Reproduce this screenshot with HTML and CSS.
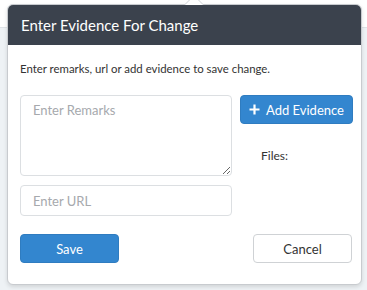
FILE: index.html
```html
<!DOCTYPE html>
<html>
<head>
<meta charset="utf-8">
<link rel="stylesheet" href="styles.css">
</head>
<body>
<div class="page">
  <div class="topbar"></div>
  <div class="backdrop"></div>
</div>
<div class="popover">
  <span class="arrow"></span>
  <div class="pop-header">Enter Evidence For Change</div>
  <div class="pop-body">
    <p class="intro">Enter remarks, url or add evidence to save change.</p>
    <div class="grid">
      <div class="left">
        <textarea class="remarks" placeholder="Enter Remarks"></textarea>
        <input class="url" type="text" placeholder="Enter URL">
      </div>
      <div class="right">
        <button class="btn btn-primary add"><svg width="11" height="11" viewBox="0 0 11 11"><path d="M5.5 0.5v10M0.5 5.5h10" stroke="#fff" stroke-width="2.2"/></svg>Add Evidence</button>
        <div class="files">Files:</div>
      </div>
    </div>
    <div class="actions">
      <button class="btn btn-primary save">Save</button>
      <button class="btn btn-default cancel">Cancel</button>
    </div>
  </div>
</div>
</body>
</html>
```
FILE: styles.css
```css
* { box-sizing: border-box; }
html, body { margin: 0; padding: 0; }
body {
  width: 367px;
  height: 290px;
  overflow: hidden;
  font-family: Lato, "Open Sans", sans-serif;
  background: #eef2f5;
  position: relative;
}
.page { display: flex; flex-direction: column; height: 290px; }
.topbar { height: 28px; background: #fff; border-bottom: 1px solid #dfe3e7; }
.backdrop { flex: 1; background: #eef2f5; }

.popover {
  position: absolute;
  left: 7px;
  top: 4px;
  width: 355px;
  height: 281px;
  background: #fff;
  border: 1px solid #c8cbcf;
  border-radius: 6px;
  box-shadow: 0 2px 4px rgba(0,0,0,0.12);
}
.arrow {
  position: absolute;
  top: -10px;
  left: 176px;
  width: 0; height: 0;
  border-left: 10px solid transparent;
  border-right: 10px solid transparent;
  border-bottom: 10px solid #cfd2d6;
}
.arrow::after {
  content: "";
  position: absolute;
  left: -9px;
  top: 1px;
  border-left: 9px solid transparent;
  border-right: 9px solid transparent;
  border-bottom: 9px solid #fff;
}
.pop-header {
  position: relative;
  height: 40px;
  background: #3b424d;
  color: #fff;
  font-size: 15px;
  line-height: 40px;
  padding-left: 13px;
  border-radius: 5px 5px 0 0;
}
.pop-body { padding: 16px 9px 0 12px; }
.intro {
  margin: 0;
  font-size: 11.4px;
  line-height: 16px;
  color: #333;
}
.grid {
  display: flex;
  margin-top: 18px;
  gap: 8px;
}
.left { width: 212px; display: flex; flex-direction: column; gap: 9px; }
.remarks, .url {
  font-family: Lato, "Open Sans", sans-serif;
  font-size: 13px;
  color: #555;
  border: 1px solid #dcdfe2;
  border-radius: 4px;
  padding: 6px 12px;
  outline: none;
  width: 212px;
}
.remarks { height: 81px; resize: vertical; display: block; }
.url { height: 31px; }
::placeholder { color: #a6a9ad; }
.right { display: flex; flex-direction: column; }
.btn {
  font-family: Lato, "Open Sans", sans-serif;
  font-size: 13px;
  border-radius: 4px;
  cursor: pointer;
  height: 29px;
  padding: 0;
}
.btn-primary { background: #3386cf; border: 1px solid #2f7cc0; color: #fff; }
.btn-default { background: #fff; border: 1px solid #cfd2d5; color: #333; }
.add {
  width: 113px;
  display: flex;
  align-items: center;
  justify-content: center;
  gap: 6px;
}
.files {
  font-size: 12px;
  color: #333;
  margin-top: 24px;
  padding-left: 21px;
}
.actions {
  display: flex;
  justify-content: space-between;
  margin-top: 18px;
}
.save { width: 99px; }
.cancel { width: 99px; }
```
